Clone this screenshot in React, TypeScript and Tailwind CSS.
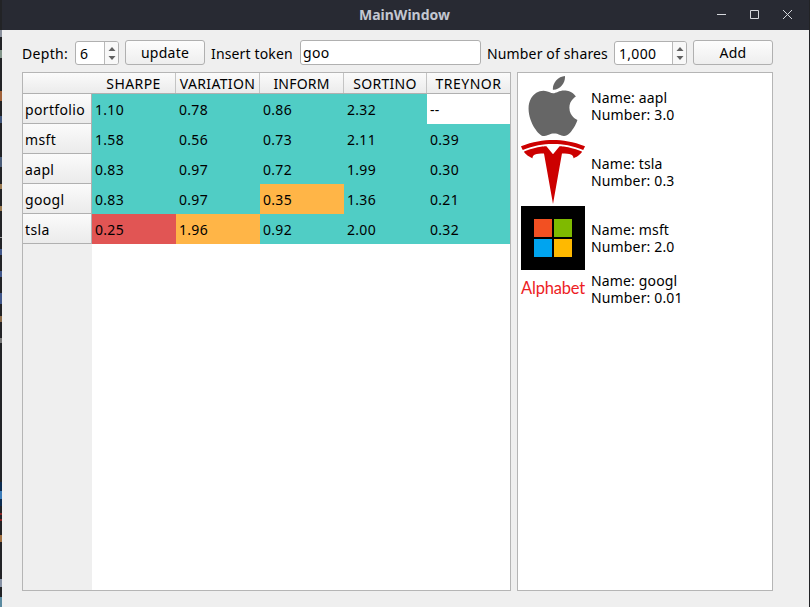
import type { ReactNode } from "react";
import { SiApple, SiTesla } from "react-icons/si";

const TEAL = "bg-[#50cdc5]";
const ORANGE = "bg-[#ffb547]";
const RED = "bg-[#e15554]";
const WHITE = "bg-white";

const columns = [
  { name: "SHARPE", track: "tracking-[0.4px]" },
  { name: "VARIATION", track: "tracking-[0.35px]" },
  { name: "INFORM", track: "tracking-[0.2px]" },
  { name: "SORTINO", track: "tracking-[0.3px]" },
  { name: "TREYNOR", track: "tracking-[0.5px]" },
];

type Cell = [string, string];
const rows: { name: string; cells: Cell[] }[] = [
  { name: "portfolio", cells: [["1.10", TEAL], ["0.78", TEAL], ["0.86", TEAL], ["2.32", TEAL], ["--", WHITE]] },
  { name: "msft", cells: [["1.58", TEAL], ["0.56", TEAL], ["0.73", TEAL], ["2.11", TEAL], ["0.39", TEAL]] },
  { name: "aapl", cells: [["0.83", TEAL], ["0.97", TEAL], ["0.72", TEAL], ["1.99", TEAL], ["0.30", TEAL]] },
  { name: "googl", cells: [["0.83", TEAL], ["0.97", TEAL], ["0.35", ORANGE], ["1.36", TEAL], ["0.21", TEAL]] },
  { name: "tsla", cells: [["0.25", RED], ["1.96", ORANGE], ["0.92", TEAL], ["2.00", TEAL], ["0.32", TEAL]] },
];

const GRID = "grid grid-cols-[69px_84px_84px_84px_83px_83px]";

// Slivers of the desktop that stay visible beside the window: [top, height, colour]
const slivers: [number, number, string][] = [
  [30, 7, "#8a909c"], [50, 8, "#82958a"], [91, 10, "#a0623a"], [116, 7, "#40557a"],
  [157, 10, "#4a5c78"], [184, 5, "#9a7a50"], [206, 5, "#9a7a50"], [237, 1, "#9a9a9a"],
  [249, 6, "#41578a"], [271, 6, "#41578a"], [293, 11, "#41578a"], [316, 6, "#8a6a48"],
  [338, 5, "#777777"], [482, 24, "#0c2c50"], [491, 8, "#3a7bb8"], [513, 2, "#8a2525"],
  [519, 2, "#8a2525"], [535, 7, "#a06f40"], [579, 8, "#8792a5"], [597, 10, "#5a8aa0"],
];

function SpinBox({ value, width }: { value: string; width: string }) {
  return (
    <div className={`mt-px flex h-6 shrink-0 overflow-hidden rounded-[3px] border border-[#b0b0b0] bg-white ${width}`}>
      <span className="flex-1 pl-1 leading-6 tracking-[0.3px]">{value}</span>
      <div className="flex w-[14px] flex-col items-center justify-center gap-[5px] border-l border-[#b8b8b8] bg-[#f8f8f8]">
        <svg width="8" height="4" viewBox="0 0 8 4"><path d="M0.5 4 4 0l3.500 4z" fill="#606060" /></svg>
        <svg width="8" height="4" viewBox="0 0 8 4"><path d="M0.500 0h7L4 4z" fill="#606060" /></svg>
      </div>
    </div>
  );
}

function Button({ children }: { children: ReactNode }) {
  return (
    <button className="h-[25px] w-20 shrink-0 rounded-[3px] border border-[#b0b0b0] bg-linear-to-b from-[#fdfdfd] to-[#eeeeee] text-center leading-[23px] tracking-[0.25px]">
      {children}
    </button>
  );
}

function MicrosoftLogo() {
  return (
    <div className="flex h-16 w-16 items-center justify-center bg-black">
      <div className="grid grid-cols-[18px_18px] grid-rows-[18px_18px] gap-[2px]">
        <div className="bg-[#f25022]" />
        <div className="bg-[#7fba00]" />
        <div className="bg-[#00a4ef]" />
        <div className="bg-[#ffb900]" />
      </div>
    </div>
  );
}

function Holding({ logo, name, count, height }: { logo: ReactNode; name: string; count: string; height: string }) {
  return (
    <div className={`flex items-center gap-[6px] ${height}`}>
      <div className="flex w-16 shrink-0 justify-center">{logo}</div>
      <div className="leading-[17px] tracking-[0.15px]">
        <div>Name: {name}</div>
        <div>Number: {count}</div>
      </div>
    </div>
  );
}

export default function App() {
  return (
    <div className="relative flex h-[607px] w-[810px] overflow-hidden bg-[#222326] pr-px pl-[2px] font-['Noto_Sans',sans-serif] text-[14px] whitespace-nowrap text-black">
      {slivers.map(([top, height, color]) => (
        <div key={top} className="absolute left-0 w-[2px]" style={{ top, height, backgroundColor: color }} />
      ))}
      <div className="flex flex-1 flex-col bg-[#efefef]">
        <header className="flex h-[30px] shrink-0 items-center bg-[#282a33] text-[#c3c7d1]">
          <div className="w-[90px]" />
          <h1 className="flex-1 pb-[2px] text-center text-[14px] font-bold">MainWindow</h1>
          <div className="flex w-[92px] items-center">
            <svg width="92" height="30" fill="none" stroke="#d5d7dc" strokeWidth="1">
              <path d="M0 14.5h9M33.5 10.5h8v8h-8zM66 10l9 9M75 10l-9 9" />
            </svg>
          </div>
        </header>
        <div className="flex h-[42px] shrink-0 pt-[10px] pl-5">
          <span className="w-[53px] leading-[27px] tracking-[0.3px]">Depth:</span>
          <SpinBox value="6" width="w-11" />
          <div className="ml-[6px]"><Button>update</Button></div>
          <span className="ml-[6px] w-[89px] leading-[27px] tracking-[0.15px]">Insert token</span>
          <div className="h-[25px] w-[181px] rounded-[3px] border border-[#b0b0b0] bg-white pl-[2px] leading-6 tracking-[0.3px]">goo</div>
          <span className="ml-[6px] w-[127px] leading-[27px] tracking-[0.15px]">Number of shares</span>
          <SpinBox value="1,000" width="w-[73px]" />
          <div className="ml-[6px]"><Button>Add</Button></div>
        </div>
        <main className="flex h-[519px] gap-[6px] pl-5">
          <section className="flex w-[489px] flex-col border border-[#b5b5b5] bg-white">
            <div className={`${GRID} h-[21px] shrink-0 grid-rows-[20px] border-b border-[#b0b0b0] bg-linear-to-b from-[#fbfbfb] to-[#ebebeb]`}>
              <span />
              {columns.map((c, i) => (
                <span key={c.name} className={`text-center leading-[21px] ${c.track} ${i < 4 ? "border-r border-[#c4c4c4]" : ""}`}>
                  {c.name}
                </span>
              ))}
            </div>
            {rows.map((r) => (
              <div key={r.name} className={`${GRID} h-[30px] shrink-0 grid-rows-[30px] leading-8`}>
                <span className="border-r border-b border-[#b0b0b0] bg-linear-to-b from-[#fbfbfb] to-[#ebebeb] pl-[2px] tracking-[0.35px]">{r.name}</span>
                {r.cells.map(([v, color], i) => (
                  <span key={i} className={`pl-[3px] tracking-[0.3px] ${color}`}>{v}</span>
                ))}
              </div>
            ))}
            <div className="w-[69px] flex-1 bg-[#efefef]" />
          </section>
          <section className="w-64 border border-[#b5b5b5] bg-white pl-[3px]">
            <Holding logo={<SiApple className="mr-px mb-px" size={60} color="#666666" />} name="aapl" count="3.0" height="h-[66px]" />
            <Holding logo={<SiTesla size={64} color="#cc0000" />} name="tsla" count="0.3" height="h-[66px]" />
            <Holding logo={<MicrosoftLogo />} name="msft" count="2.0" height="h-[66px]" />
            <Holding
              logo={<span className="pb-[2px] font-['Lato',sans-serif] text-[16.5px] leading-[18px] tracking-[-0.2px] text-[#ed1c24]">Alphabet</span>}
              name="googl"
              count="0.01"
              height="h-9"
            />
          </section>
        </main>
      </div>
    </div>
  );
}
